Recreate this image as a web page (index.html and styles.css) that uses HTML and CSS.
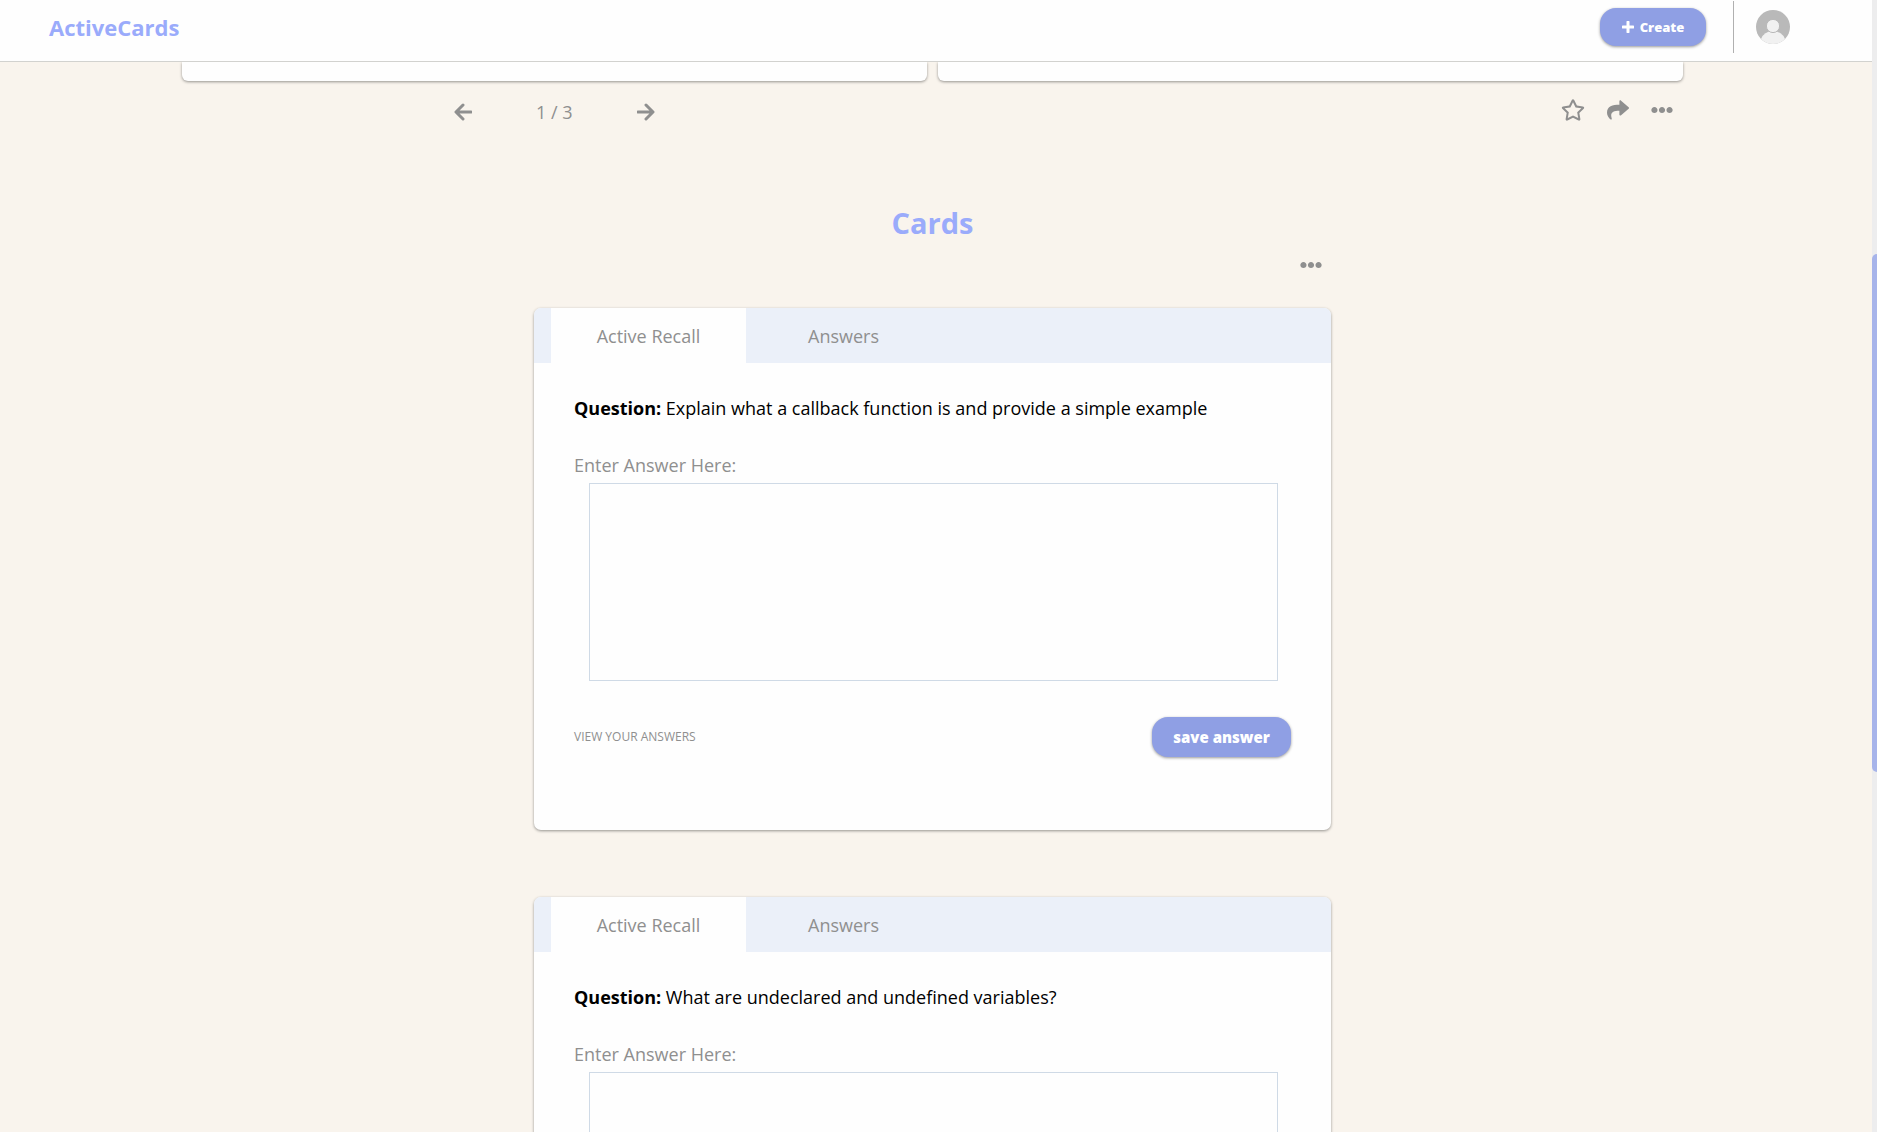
FILE: index.html
```html
<!DOCTYPE html>
<html lang="en">
<head>
<meta charset="utf-8">
<title>ActiveCards</title>
<link rel="stylesheet" href="styles.css">
</head>
<body>
<svg class="sprite" aria-hidden="true">
  <symbol id="dots" viewBox="0 0 512 512"><path d="M328 256c0 39.8-32.200 72-72 72s-72-32.200-72-72 32.200-72 72-72 72 32.200 72 72zm104-72c-39.800 0-72 32.200-72 72s32.200 72 72 72 72-32.200 72-72-32.200-72-72-72zm-352 0c-39.800 0-72 32.200-72 72s32.200 72 72 72 72-32.200 72-72-32.200-72-72-72z"/></symbol>
</svg>

<header class="topbar">
  <a class="brand" href="#">ActiveCards</a>
  <div class="topbar-actions">
    <button class="pill create" type="button">
      <svg class="plus" viewBox="0 0 12 12" aria-hidden="true"><path d="M6 1v10M1 6h10"/></svg>
      Create
    </button>
    <span class="divider"></span>
    <button class="avatar" type="button" aria-label="Account">
      <svg viewBox="0 0 34 34" aria-hidden="true">
        <circle cx="17" cy="17" r="17" fill="#b9b9b9"/>
        <path d="M5 29a12.500 11 0 0 1 24 0a17 17 0 0 1-24 0z" fill="#f1f1f1"/>
        <circle cx="17" cy="16" r="6.600" fill="#f1f1f1" stroke="#b9b9b9"/>
      </svg>
    </button>
  </div>
</header>

<main class="page">
  <section class="deck">
    <div class="panels">
      <div class="panel"></div>
      <div class="panel"></div>
    </div>
    <div class="deck-bar">
      <div class="pager">
        <button class="icon" type="button" aria-label="Previous"><svg class="arrow" viewBox="0 0 18 18"><path d="M9 2L2 9l7 7M3 9h14"/></svg></button>
        <span>1 / 3</span>
        <button class="icon" type="button" aria-label="Next"><svg class="arrow" viewBox="0 0 18 18"><path d="M9 2l7 7-7 7M15 9H1"/></svg></button>
      </div>
      <div class="tools">
        <button class="icon" type="button" aria-label="Favourite"><svg class="star" viewBox="0 0 576 512"><path d="M528.100 171.500L382 150.200 316.700 17.800c-11.700-23.600-45.600-23.900-57.400 0L194 150.200 47.900 171.500c-26.200 3.800-36.700 36.100-17.700 54.600l105.700 103-25 145.500c-4.500 26.300 23.200 46 46.400 33.700L288 439.600l130.700 68.700c23.200 12.200 50.900-7.400 46.400-33.700l-25-145.500 105.700-103c19-18.500 8.500-50.800-17.700-54.600zM388.600 312.300l23.700 138.400L288 385.400l-124.300 65.300 23.700-138.400-100.600-98 139-20.200 62.200-126 62.200 126 139 20.200-100.600 98z"/></svg></button>
        <button class="icon" type="button" aria-label="Share"><svg class="share" viewBox="0 0 512 512"><path d="M503.700 189.800L327.700 37.900C312.300 24.500 288 35.300 288 56v80.100C127.400 137.900 0 170.100 0 322.300c0 61.400 39.600 122.300 83.300 154.100 13.700 9.900 33.100-2.500 28.100-18.600C66.100 312.800 132.900 274.300 288 272.100V360c0 20.700 24.300 31.500 39.700 18.200l176-152c11.100-9.600 11.100-26.800 0-36.400z"/></svg></button>
        <button class="icon" type="button" aria-label="More"><svg class="dots"><use href="#dots"/></svg></button>
      </div>
    </div>
  </section>

  <section class="cards">
    <h1>Cards</h1>
    <div class="cards-menu">
      <button class="icon" type="button" aria-label="Card options"><svg class="dots"><use href="#dots"/></svg></button>
    </div>

    <article class="card">
      <div class="tabs">
        <button class="tab active" type="button">Active Recall</button>
        <button class="tab" type="button">Answers</button>
      </div>
      <div class="card-body">
        <p class="question"><strong>Question:</strong> Explain what a callback function is and provide a simple example</p>
        <label for="answer-1">Enter Answer Here:</label>
        <textarea id="answer-1"></textarea>
        <div class="card-actions">
          <button class="view" type="button">VIEW YOUR ANSWERS</button>
          <button class="pill save" type="button">save answer</button>
        </div>
      </div>
    </article>

    <article class="card">
      <div class="tabs">
        <button class="tab active" type="button">Active Recall</button>
        <button class="tab" type="button">Answers</button>
      </div>
      <div class="card-body">
        <p class="question"><strong>Question:</strong> What are undeclared and undefined variables?</p>
        <label for="answer-2">Enter Answer Here:</label>
        <textarea id="answer-2"></textarea>
      </div>
    </article>
  </section>
</main>
<div class="scrollbar" aria-hidden="true"><div class="thumb"></div></div>
</body>
</html>
```

FILE: styles.css
```css
* {
  box-sizing: border-box;
}

html {
  scrollbar-width: none;
}

body {
  margin: 0;
  background: #f9f4ed;
  color: #8f8f8f;
  font: 18px/24px "Open Sans", "Noto Sans", sans-serif;
}

button {
  margin: 0;
  padding: 0;
  border: 0;
  background: none;
  color: inherit;
  font: inherit;
  cursor: pointer;
}

svg {
  display: block;
  fill: currentColor;
}

.sprite {
  display: none;
}

/* Top bar */
.topbar {
  position: sticky;
  top: 0;
  z-index: 1;
  display: flex;
  align-items: center;
  justify-content: space-between;
  height: 62px;
  margin-right: 5px;
  padding: 0 82px 7px 49px;
  border-bottom: 1px solid #d2d2cf;
  background: #fefefe;
}

.brand {
  color: #9aabfb;
  font-size: 22px;
  font-weight: 700;
  text-decoration: none;
}

.topbar-actions {
  display: flex;
  align-items: center;
}

.pill {
  border-radius: 16px;
  background: #8f9fe4;
  box-shadow: 0 1px 3px rgba(0, 0, 0, 0.4);
  color: #fff;
  font-weight: 800;
}

.create {
  display: flex;
  align-items: center;
  justify-content: center;
  gap: 6px;
  width: 106px;
  height: 38px;
  font-size: 13px;
}

.plus {
  width: 12px;
  height: 12px;
  stroke: currentColor;
  stroke-width: 3;
  stroke-linecap: round;
}

.divider {
  width: 1px;
  height: 52px;
  margin: 0 22px 0 27px;
  background: #b0b0b0;
}

.avatar svg {
  width: 34px;
  height: 34px;
}

/* Deck viewer */
.page {
  padding: 0 12px 67px 0;
}

.deck {
  max-width: 1501px;
  margin: 0 auto;
}

.panels {
  display: grid;
  grid-template-columns: 1fr 1fr;
  gap: 11px;
}

.panel {
  height: 19px;
  border-radius: 0 0 6px 6px;
}

.panel,
.card {
  background: #fefefe;
  box-shadow: 0 1px 3px rgba(0, 0, 0, 0.4);
}

.deck-bar {
  display: flex;
  justify-content: space-between;
  padding: 17px 10px 0 272px;
}

.pager {
  display: flex;
  align-items: center;
  gap: 64px;
  height: 28px;
}

.arrow {
  width: 18px;
  height: 18px;
  fill: none;
  stroke: currentColor;
  stroke-width: 3;
  stroke-linecap: round;
  stroke-linejoin: round;
}

.tools {
  display: flex;
  align-items: center;
  gap: 22px;
  height: 24px;
}

.star {
  width: 24px;
  height: 22px;
}

.share,
.dots {
  width: 22px;
  height: 22px;
}

/* Cards */
.cards {
  max-width: 797px;
  margin: 0 auto;
  padding-top: 77px;
}

h1 {
  margin: 0;
  color: #9aabfb;
  font-size: 29px;
  line-height: 40px;
  text-align: center;
}

.cards-menu {
  display: flex;
  justify-content: flex-end;
  padding: 11px 9px 32px;
}

.card {
  overflow: hidden;
  border-radius: 7px;
}

.card + .card {
  margin-top: 67px;
}

.tabs {
  display: flex;
  padding-left: 17px;
  background: #ebf0f9;
}

.tab {
  width: 195px;
  height: 55px;
}

.tab.active {
  background: #fefefe;
}

.card-body {
  padding: 33px 40px 73px;
}

.question {
  margin: 0 0 33px;
  color: #000;
}

label {
  display: block;
  margin-bottom: 6px;
}

textarea {
  display: block;
  width: calc(100% - 28px);
  height: 198px;
  margin-left: 15px;
  padding: 8px;
  border: 1px solid #cfdae6;
  background: #fefefe;
  font: inherit;
  resize: none;
}

.card-actions {
  display: flex;
  align-items: center;
  justify-content: space-between;
  padding-top: 36px;
}

.view {
  font-size: 12px;
}

.save {
  width: 139px;
  height: 40px;
  font-size: 15px;
}

/* Page scroll indicator */
.scrollbar {
  position: fixed;
  top: 0;
  right: 0;
  bottom: 0;
  width: 5px;
  padding-top: 254px;
  background: #ededee;
}

.thumb {
  height: 518px;
  border-radius: 5px 0 0 5px;
  background: #a7b4ea;
}
```
